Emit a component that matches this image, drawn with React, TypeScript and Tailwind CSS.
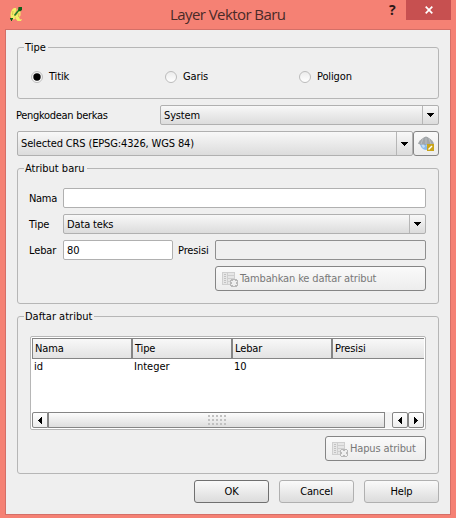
import type { ReactNode } from "react";

function Group({ title, className, children }: { title: ReactNode; className: string; children: ReactNode }) {
  return (
    <fieldset className={`ml-[11px] w-[422px] min-w-0 rounded-[3px] border border-[#b6b6b6] ${className}`}>
      <legend className="ml-[6px] h-[13px] px-px pr-[2px] leading-[13px] tracking-normal whitespace-nowrap">{title}</legend>
      {children}
    </fieldset>
  );
}

function Radio({ label, checked, className }: { label: string; checked?: boolean; className: string }) {
  return (
    <label className={`flex items-center gap-[6px] ${className}`}>
      <span className="flex size-[12px] items-center justify-center rounded-full border border-[#bcbcbc] bg-gradient-to-b from-[#ececec] to-white">
        {checked && (
          <svg width="8" height="8" viewBox="0 0 8 8">
            <circle cx="4" cy="4" r="3.7" />
          </svg>
        )}
      </span>
      <span>{label}</span>
    </label>
  );
}

function Combo({ children, className }: { children: ReactNode; className: string }) {
  return (
    <div className={`flex items-stretch rounded-[2px] border border-[#b0b0b0] bg-gradient-to-b from-[#f8f8f8] to-[#dcdcdc] ${className}`}>
      <div className="flex flex-1 items-center pl-[3px] whitespace-nowrap">{children}</div>
      <div className="flex w-[16px] items-center justify-center border-l border-[#b6b6b6]">
        <svg width="7" height="4" viewBox="0 0 7 4" shapeRendering="crispEdges">
          <path d="M0 0h7v1h-1v1h-1v1h-1v1h-1v-1h-1v-1h-1v-1h-1z" />
        </svg>
      </div>
    </div>
  );
}

function Button({ children, className }: { children: ReactNode; className: string }) {
  return (
    <button className={`flex items-center rounded-[3px] border bg-gradient-to-b whitespace-nowrap ${className}`}>
      {children}
    </button>
  );
}

function TableIcon({ remove }: { remove?: boolean }) {
  return (
    <svg width="16" height="16" viewBox="0 0 16 16" shapeRendering="crispEdges">
      <path d="M0 1h13v13H0z" fill="#cfcfcf" />
      <path d="M1 2h4v11H1zM6 2h6v2H6zM6 5h6v2H6zM6 8h6v2H6zM6 11h4v2H6z" fill="#e6e6e6" />
      <path d="M2 3h2v1H2zM2 5h2v1H2zM2 7h2v1H2zM2 9h2v1H2zM2 11h2v1H2z" fill="#c2c2c2" />
      <path d="M9 8h6v1h1v6h-1v1H9v-1H8V9h1z" fill="#b9b9b9" />
      {remove ? (
        <path d="M9 9h2v1h2V9h2v2h-1v2h1v2h-2v-1h-2v1H9v-2h1v-2H9z" fill="#efefef" />
      ) : (
        <path d="M11 9h2v1h2v1h-1v2h1v1h-2v1h-2v-1H9v-1h1v-2H9v-1h2z" fill="#efefef" />
      )}
    </svg>
  );
}

function GlobeIcon() {
  return (
    <svg width="16" height="16" viewBox="0 0 16 16">
      <path d="M2 7h12c0 4-3 7-6 7S2 11 2 7z" fill="#8dbbe8" />
      <path d="M3 8h3l1 3-2 1zM8 8h4v2l-3 1z" fill="#c5def4" />
      <path d="M0 7.5l2-3 3-2.5 3-1.5 3 1.5 3 2.5 2 3-2 1H2z" fill="#8f9497" />
      <path d="M2 5h12M0.5 7h15M5 2.5L3 8M8 1v7M11 2.5L13 8M4 3h8" stroke="#cfd2d4" strokeWidth=".6" fill="none" />
      <rect x="9" y="8" width="7" height="7" fill="#c9a51b" />
      <path d="M10.5 13.5l3.5-3.5" stroke="#fff" strokeWidth="1.5" />
    </svg>
  );
}

function AppIcon() {
  return (
    <svg width="12" height="15" viewBox="0 0 12 15">
      <path d="M4 1C2 2 .5 5 .5 8c0 2.500 1 4.500 3.500 4.500L6 11C4.800 10 4.500 9 4.500 7l2-3.500L6 1zM7 2.500l3.500 1v5L9 10l1 2.500 2-.5-1 2H7.500L5.500 11.500 4.500 9l3-2z" fill="#f3ef68" />
      <path d="M3 4l-.5 4M9 6l-.5 4" stroke="#c4ae48" strokeWidth=".7" fill="none" />
      <path d="M4.500 8.500L9 3" stroke="#1c8a27" strokeWidth="1.600" />
      <path d="M8.500 0H12v3l-2 1.500-2-1zM0 11h3v1.500H2V14H1v-1.500H0z" fill="#10601a" />
    </svg>
  );
}

function Arrow({ right }: { right?: boolean }) {
  return (
    <svg width="4" height="7" viewBox="0 0 4 7" shapeRendering="crispEdges" className={right ? "rotate-180" : ""}>
      <path d="M4 0v7H3V6H2V5H1V4H0V3h1V2h1V1h1V0z" />
    </svg>
  );
}

const columns = ["Nama", "Tipe", "Lebar", "Presisi"];
const values = ["id", "Integer", "10", ""];

export default function App() {
  return (
    <div className="h-[518px] w-[456px] overflow-hidden bg-[#f58174] font-['DejaVu_Sans_Condensed','DejaVu_Sans',sans-serif] text-[11px] leading-[13px] tracking-[-0.14px] text-black [font-stretch:condensed]">
      <header className="flex h-[29px] items-start pl-[10px]">
        <div className="mt-[7px] w-[160px]">
          <AppIcon />
        </div>
        <h1 className="mt-[4px] w-[219px] font-['Open_Sans',sans-serif] text-[15px] leading-[21px] tracking-[-0.57px] whitespace-nowrap text-[#492a28] [font-stretch:normal]">
          Layer Vektor Baru
        </h1>
        <div className="mt-[3px] w-[17px] font-['Open_Sans',sans-serif] text-[14px] leading-[14px] font-bold text-[#2b1817] [font-stretch:normal]">?</div>
        <div className="flex h-[20px] w-[45px] items-center justify-center bg-[#c75050]">
          <svg width="8" height="8" viewBox="0 0 8 8">
            <path d="M.7.7l6.6 6.6M7.3.7L.7 7.3" stroke="#fff" strokeWidth="1.7" />
          </svg>
        </div>
      </header>

      <main className="ml-[5px] flex h-[486px] w-[446px] flex-col border border-[#d46f67] bg-[#efefef]">
        <Group title="Tipe" className="mt-[11px] h-[58px]">
          <div className="flex pt-[16px] pl-[13px]">
            <Radio label="Titik" checked className="w-[134px]" />
            <Radio label="Garis" className="w-[134px]" />
            <Radio label="Poligon" className="" />
          </div>
        </Group>

        <div className="mt-[6px] flex h-[20px] items-center pl-[10px]">
          <div className="w-[144px] tracking-[-0.3px]">Pengkodean berkas</div>
          <Combo className="h-[20px] w-[279px]">System</Combo>
        </div>
        <div className="mt-[6px] flex pl-[11px]">
          <Combo className="h-[25px] w-[396px]">Selected CRS (EPSG:4326, WGS 84)</Combo>
          <Button className="h-[25px] w-[26px] justify-center border-[#858585] from-[#fafafa] to-[#ececec]">
            <GlobeIcon />
          </Button>
        </div>

        <Group title="Atribut baru" className="mt-[6px] h-[142px]">
          <div className="flex flex-col gap-[6px] pt-[13px] pl-[11px]">
            <div className="flex h-[20px] items-center">
              <div className="w-[34px] tracking-[-0.3px]">Nama</div>
              <div className="h-[20px] w-[363px] rounded-[2px] border border-[#b0b0b0] bg-white" />
            </div>
            <div className="flex h-[20px] items-center">
              <div className="w-[34px]">Tipe</div>
              <Combo className="h-[20px] w-[363px]">Data teks</Combo>
            </div>
            <div className="flex h-[20px] items-center">
              <div className="w-[34px]">Lebar</div>
              <div className="flex h-[20px] w-[110px] items-center rounded-[2px] border border-[#b0b0b0] bg-white pt-px pl-[3px]">80</div>
              <div className="w-[42px] pl-[5px]">Presisi</div>
              <div className="h-[20px] w-[211px] rounded-[2px] border border-[#8f8f8f] bg-[#efefef]" />
            </div>
            <Button className="ml-[186px] h-[25px] w-[211px] gap-[2px] border-[#858585] from-[#fafafa] to-[#ededed] pl-[6px] text-[#787878]">
              <TableIcon />
              <span>Tambahkan ke daftar atribut</span>
            </Button>
          </div>
        </Group>

        <Group title="Daftar atribut" className="mt-[6px] h-[164px]">
          <div className="flex flex-col pt-[13px] pl-[12px]">
            <div className="flex h-[94px] w-[396px] flex-col rounded-[2px] border border-[#b6b6b6] bg-white">
              <div className="m-px flex h-[21px] border-t border-b border-l border-[#858585] bg-gradient-to-b from-[#f8f8f8] to-[#e3e3e3]">
                {columns.map((c, i) => (
                  <div key={c} className={`flex items-center pl-[2px] ${i < 3 ? "w-[100px] shrink-0 border-r-2 border-[#858585]" : "flex-1"}`}>{c}</div>
                ))}
              </div>
              <div className="flex pl-[3px]">
                {values.map((v, i) => (
                  <div key={i} className={i < 3 ? "w-[100px] shrink-0 tracking-normal" : "flex-1"}>{v}</div>
                ))}
              </div>
              <div className="mx-px mt-auto mb-px flex h-[16px] bg-[#f4f4f4]">
                <div className="flex w-[16px] items-center justify-center rounded-l-[2px] border border-[#858585] bg-gradient-to-b from-white to-[#ededed]">
                  <Arrow />
                </div>
                <div className="flex w-[337px] items-center justify-center border border-[#858585] bg-gradient-to-b from-[#fcfcfc] to-[#dedede]">
                  <svg width="18" height="10" viewBox="0 0 18 10" shapeRendering="crispEdges">
                    {[0, 4, 8].map((y) =>
                      [0, 4, 8, 12, 16].map((x) => <rect key={`${x}-${y}`} x={x} y={y} width="2" height="2" fill="#c1c1c1" />),
                    )}
                  </svg>
                </div>
                <div className="w-[7px]" />
                <div className="flex w-[16px] items-center justify-center rounded-[2px] border border-[#858585] bg-gradient-to-b from-white to-[#ededed]">
                  <Arrow />
                </div>
                <div className="flex w-[16px] items-center justify-center rounded-[2px] border border-[#858585] bg-gradient-to-b from-white to-[#ededed]">
                  <Arrow right />
                </div>
              </div>
            </div>
            <Button className="mt-[6px] ml-[295px] h-[25px] w-[101px] gap-[2px] border-[#858585] from-[#fafafa] to-[#ededed] pl-[6px] text-[#787878]">
              <TableIcon remove />
              <span>Hapus atribut</span>
            </Button>
          </div>
        </Group>

        <div className="mt-[6px] flex gap-[10px] pl-[188px]">
          <Button className="h-[23px] w-[75px] justify-center border-[#707070] from-[#fafafa] to-[#dcdcdc]">OK</Button>
          <Button className="h-[23px] w-[75px] justify-center border-[#b0b0b0] from-[#fafafa] to-[#dcdcdc]">Cancel</Button>
          <Button className="h-[23px] w-[75px] justify-center border-[#b0b0b0] from-[#fafafa] to-[#dcdcdc]">Help</Button>
        </div>
      </main>
    </div>
  );
}
